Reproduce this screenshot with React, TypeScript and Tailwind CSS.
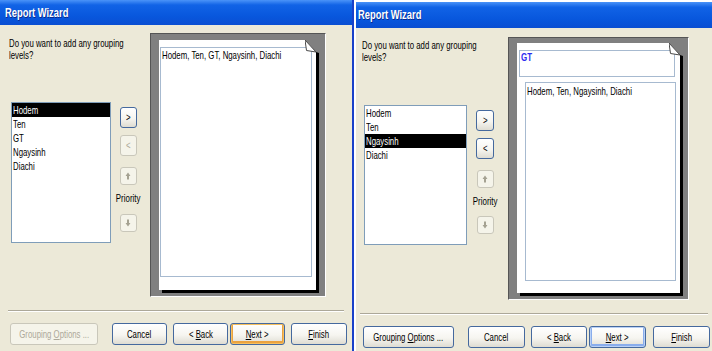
import React from "react";

const S = "inline-block whitespace-nowrap origin-left scale-x-[0.71]";

function TitleBar({ className }: { className: string }) {
  return (
    <div
      className={`flex items-center bg-[linear-gradient(to_bottom,#4a93f8_0%,#1163e6_20%,#0857dd_65%,#0a4ed2_100%)] ${className}`}
    >
      <span className="inline-block origin-left scale-x-[0.72] whitespace-nowrap text-[13px] font-bold text-white [text-shadow:1px_1px_0_#0a2a8c]">
        Report Wizard
      </span>
    </div>
  );
}

function ListBox({
  className,
  items,
  selected,
}: {
  className: string;
  items: string[];
  selected: number;
}) {
  return (
    <div className={`border border-[#7f9db9] bg-white ${className}`}>
      {items.map((it, i) => (
        <div
          key={it}
          className={`h-[14px] pl-[1px] leading-[14px] ${i === selected ? "bg-black text-white" : "text-black"}`}
        >
          <span className={S}>{it}</span>
        </div>
      ))}
    </div>
  );
}

function Btn({
  className,
  children,
  disabled,
  ring,
}: {
  className: string;
  children: React.ReactNode;
  disabled?: boolean;
  ring?: string;
}) {
  const base = disabled
    ? "border-[#c9c7ba] bg-[#f5f4ea] text-[#aca899]"
    : "border-[#45699e] bg-[linear-gradient(to_bottom,#ffffff_0%,#f6f5f0_55%,#dedcd2_100%)] text-black";
  return (
    <div
      className={`flex items-center justify-center rounded-[3px] border ${base} ${ring ?? ""} ${className}`}
    >
      <span className="inline-block origin-center scale-x-[0.71] whitespace-nowrap">
        {children}
      </span>
    </div>
  );
}

function Arrow({ down }: { down?: boolean }) {
  return (
    <svg width="8" height="8" viewBox="0 0 8 8" className={down ? "rotate-180" : ""}>
      <path d="M4 0.5 L7.5 4 H5.4 V7.5 H2.6 V4 H0.5 Z" fill="#a5a292" />
    </svg>
  );
}

function Fold() {
  return (
    <svg
      width="14"
      height="13"
      viewBox="0 0 14 13"
      className="absolute right-[-3px] top-0"
    >
      <polygon points="0,0 14,0 14,13 11,12" fill="#808080" />
      <polygon points="0,0 11,12 1.5,10.5" fill="#ffffff" stroke="#4a4a4a" strokeWidth="1" />
    </svg>
  );
}

function Separator({ className }: { className: string }) {
  return <div className={`h-[2px] border-t border-b border-t-[#aca899] border-b-white ${className}`} />;
}

const frameCls =
  "border border-t-[#555555] border-l-[#555555] border-r-white border-b-white bg-[#808080]";

export default function App() {
  return (
    <div className="flex h-[351px] w-[712px] overflow-hidden bg-white font-['Liberation_Sans',Arial,sans-serif] text-[11px] text-black">
      {/* LEFT WINDOW */}
      <div className="flex h-full w-[354px] flex-col border-r-2 border-[#1941c9] bg-[#ece9d8]">
        <TitleBar className="h-[25px] pl-[5px]" />
        <div className="flex pl-[9px] pt-[8px]">
          <div className="flex w-[141px] flex-col">
            <div className="mt-[4px] leading-[12px]">
              <div className="h-[12px]">
                <span className={S}>Do you want to add any grouping</span>
              </div>
              <div className="h-[12px]">
                <span className={S}>levels?</span>
              </div>
            </div>
            <div className="mt-[41px] flex items-start">
              <ListBox
                className="ml-[2px] h-[141px] w-[100px]"
                items={["Hodem", "Ten", "GT", "Ngaysinh", "Diachi"]}
                selected={0}
              />
              <div className="ml-[2px] flex w-[30px] flex-col items-center pt-[5px]">
                <Btn className="h-[21px] w-[17px]">&gt;</Btn>
                <Btn className="mt-[7px] h-[21px] w-[17px]" disabled>
                  &lt;
                </Btn>
                <Btn className="mt-[11px] h-[18px] w-[17px]" disabled>
                  <Arrow />
                </Btn>
                <div className="mt-[7px] h-[12px] leading-[12px]">
                  <span className="inline-block origin-center scale-x-[0.72] whitespace-nowrap">
                    Priority
                  </span>
                </div>
                <Btn className="mt-[10px] h-[18px] w-[17px]" disabled>
                  <Arrow down />
                </Btn>
              </div>
            </div>
          </div>
          <div className={`h-[264px] w-[176px] pl-[8px] pt-[6px] ${frameCls}`}>
            <div className="relative h-[250px] w-[157px] bg-white shadow-[3px_3px_0_#000000]">
              <div className="ml-[1px] inline-block pt-[7px]">
                <div className="h-[230px] w-[152px] border border-[#a7bad0] pl-[1px] pt-[1px] leading-[12px]">
                  <span className={S}>Hodem, Ten, GT, Ngaysinh, Diachi</span>
                </div>
              </div>
              <Fold />
            </div>
          </div>
        </div>
        <Separator className="ml-[8px] mt-[13px] w-[336px]" />
        <div className="mt-[11px] flex">
          <Btn className="ml-[10px] h-[22px] w-[88px]" disabled>
            Grouping <u>O</u>ptions ...
          </Btn>
          <Btn className="ml-[14px] h-[22px] w-[55px]">Cancel</Btn>
          <Btn className="ml-[6px] h-[22px] w-[55px]">
            &lt; <u>B</u>ack
          </Btn>
          <Btn
            className="ml-[2px] h-[22px] w-[55px]"
            ring="shadow-[inset_0_0_0_1px_#f6c05e,inset_0_-1px_0_2px_#eaa23f]"
          >
            <u>N</u>ext &gt;
          </Btn>
          <Btn className="ml-[6px] h-[22px] w-[56px]">
            <u>F</u>inish
          </Btn>
        </div>
      </div>

      {/* RIGHT WINDOW */}
      <div className="ml-[2px] mt-[2px] flex h-[349px] w-[356px] flex-col bg-[#ece9d8]">
        <TitleBar className="h-[26px] pl-[2px]" />
        <div className="flex pl-[6px] pt-[9px]">
          <div className="flex w-[146px] flex-col">
            <div className="mt-[2px] leading-[12px]">
              <div className="h-[12px]">
                <span className={S}>Do you want to add any grouping</span>
              </div>
              <div className="h-[12px]">
                <span className={S}>levels?</span>
              </div>
            </div>
            <div className="mt-[42px] flex items-start">
              <ListBox
                className="ml-[2px] h-[140px] w-[103px]"
                items={["Hodem", "Ten", "Ngaysinh", "Diachi"]}
                selected={2}
              />
              <div className="ml-[3px] flex w-[30px] flex-col items-center pt-[5px]">
                <Btn className="h-[21px] w-[18px]">&gt;</Btn>
                <Btn className="mt-[7px] h-[21px] w-[18px]">&lt;</Btn>
                <Btn className="mt-[11px] h-[18px] w-[17px]" disabled>
                  <Arrow />
                </Btn>
                <div className="mt-[7px] h-[12px] leading-[12px]">
                  <span className="inline-block origin-center scale-x-[0.72] whitespace-nowrap">
                    Priority
                  </span>
                </div>
                <Btn className="mt-[9px] h-[18px] w-[17px]" disabled>
                  <Arrow down />
                </Btn>
              </div>
            </div>
          </div>
          <div className={`h-[263px] w-[181px] pl-[8px] pt-[5px] ${frameCls}`}>
            <div className="relative h-[250px] w-[163px] bg-white shadow-[3px_3px_0_#000000]">
              <div className="flex flex-col pt-[7px]">
                <div className="ml-[2px] h-[27px] w-[156px] border border-[#a7bad0] pl-[1px] leading-[12px]">
                  <span className="inline-block origin-left scale-x-[0.72] whitespace-nowrap font-bold text-[#2b2bf0]">
                    GT
                  </span>
                </div>
                <div className="ml-[8px] mt-[5px] h-[199px] w-[151px] border border-[#a7bad0] pl-[1px] pt-[2px] leading-[12px]">
                  <span className={S}>Hodem, Ten, Ngaysinh, Diachi</span>
                </div>
              </div>
              <Fold />
            </div>
          </div>
        </div>
        <Separator className="ml-[4px] mt-[13px] w-[348px]" />
        <div className="mt-[11px] flex">
          <Btn className="ml-[7px] h-[22px] w-[91px]">
            Grouping <u>O</u>ptions ...
          </Btn>
          <Btn className="ml-[14px] h-[22px] w-[57px]">Cancel</Btn>
          <Btn className="ml-[6px] h-[22px] w-[56px]">
            &lt; <u>B</u>ack
          </Btn>
          <Btn
            className="ml-[2px] h-[22px] w-[57px]"
            ring="shadow-[inset_0_0_0_1px_#b9d1f6,inset_0_-1px_0_2px_#89adec]"
          >
            <u>N</u>ext &gt;
          </Btn>
          <Btn className="ml-[7px] h-[22px] w-[57px]">
            <u>F</u>inish
          </Btn>
        </div>
      </div>
    </div>
  );
}
